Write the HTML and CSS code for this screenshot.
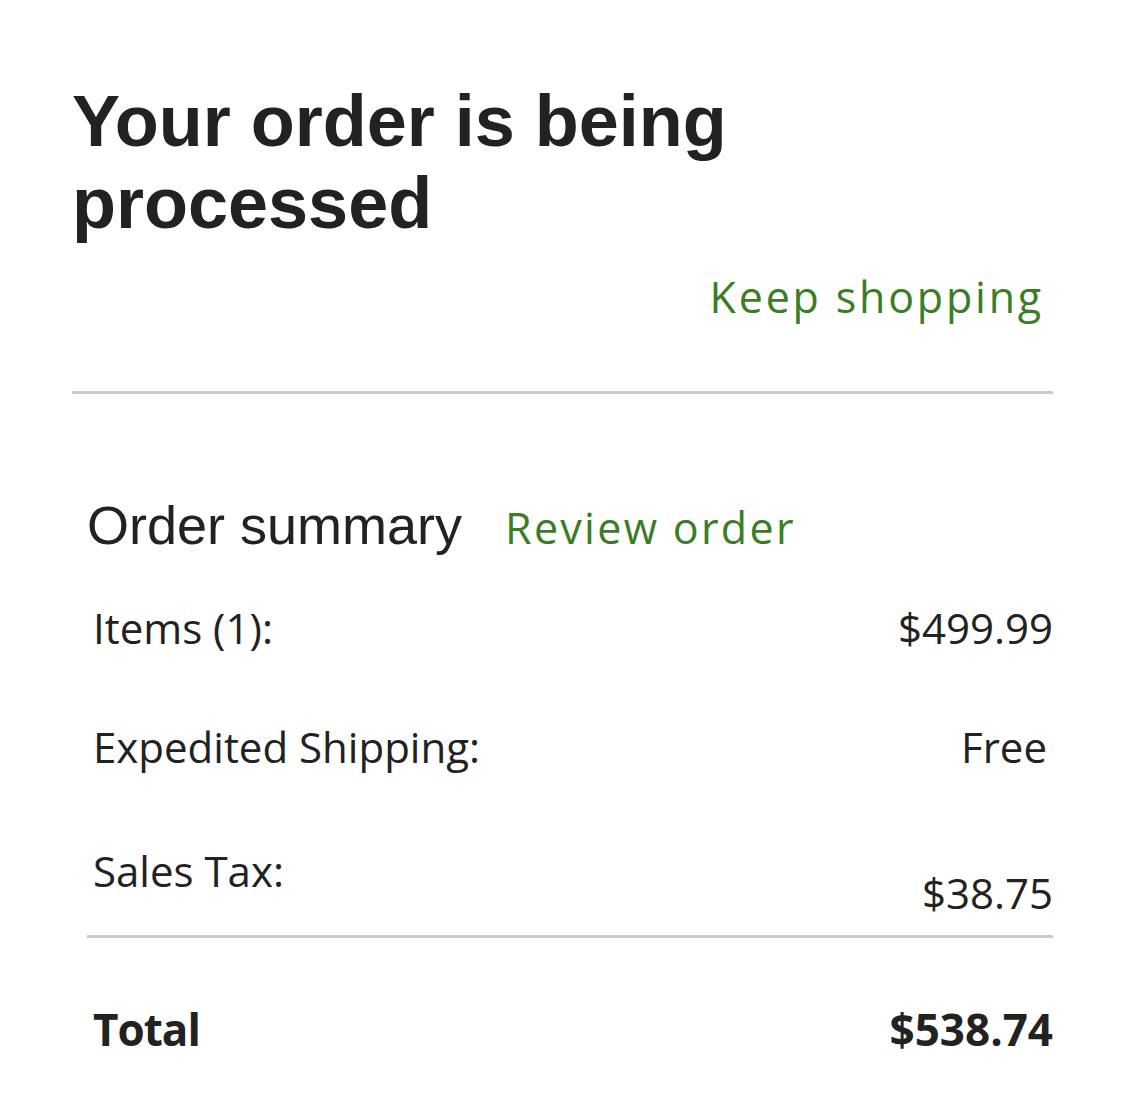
FILE: index.html
```html
<!DOCTYPE html>
<html lang="en">
<head>
<meta charset="utf-8">
<title>Order processing</title>
<link rel="stylesheet" href="styles.css">
</head>
<body>
<main class="page">
  <h1 class="title">Your order is being processed</h1>
  <div class="keep-row"><a class="link keep" href="#">Keep shopping</a></div>
  <hr class="divider">
  <section class="summary">
    <div class="summary-head">
      <h2 class="summary-title">Order summary</h2>
      <a class="link review" href="#">Review order</a>
    </div>
    <div class="row row-items"><span>Items (1):</span><span>$499.99</span></div>
    <div class="row row-ship"><span>Expedited Shipping:</span><span class="free">Free</span></div>
    <div class="row row-tax"><span>Sales Tax:</span><span class="tax-val">$38.75</span></div>
    <hr class="divider divider-sub">
    <div class="row row-total"><span class="total-label">Total</span><span>$538.74</span></div>
  </section>
</main>
</body>
</html>
```
FILE: styles.css
```css
* { box-sizing: border-box; }
html, body { margin: 0; padding: 0; background: #fff; }
body { color: #222; font-family: "Open Sans", "Noto Sans", sans-serif; }
.page { width: 1125px; padding: 80px 72px 0 72px; }
.title {
  margin: 0;
  font-family: "Liberation Sans", Arial, sans-serif;
  font-weight: 700;
  font-size: 72px;
  line-height: 82px;
  color: #222;
  width: 720px;
}
.keep-row { display: flex; justify-content: flex-end; padding-right: 9px; margin-top: 25px; }
.link { color: #3b7d25; text-decoration: none; font-size: 43px; letter-spacing: 2.7px; line-height: 56px; }
.keep { letter-spacing: 2.8px; }
.review { letter-spacing: 2.3px; }
.divider { border: 0; border-top: 3px solid #cbcbcb; margin: 66px 0 0 0; }
.summary { padding: 101px 0 0 15px; }
.summary-head { display: flex; align-items: baseline; gap: 43px; }
.summary-title {
  margin: 0;
  font-family: "Liberation Sans", Arial, sans-serif;
  font-weight: 400;
  font-size: 54px;
  line-height: 60px;
  color: #222;
}
.row { display: flex; justify-content: space-between; align-items: flex-start; font-size: 42px; line-height: 56px; padding-left: 6px; }
.row-items { margin-top: 44px; }
.row-ship { margin-top: 63px; }
.free { padding-right: 6px; }
.row-tax { margin-top: 68px; }
.tax-val { margin-top: 22px; }
.divider-sub { margin-top: 14px; }
.row-total { margin-top: 63px; font-weight: 700; font-size: 44px; }
.total-label { letter-spacing: -1px; }
```
